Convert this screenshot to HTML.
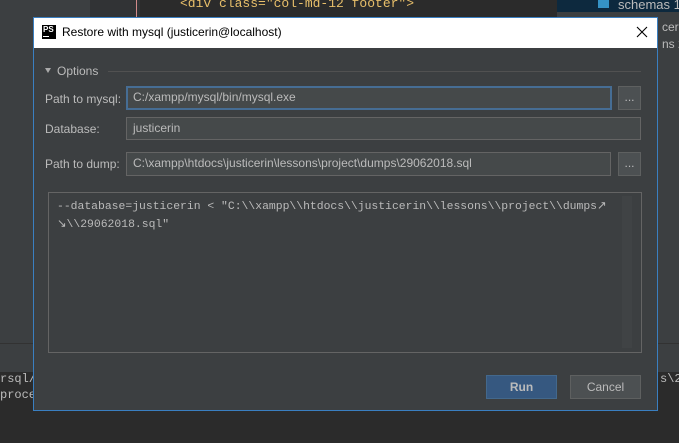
<!DOCTYPE html>
<html><head><meta charset="utf-8"><style>
*{box-sizing:border-box;margin:0;padding:0}
body{width:679px;height:443px;overflow:hidden;background:#2b2b2b;position:relative;font-family:"Liberation Sans",sans-serif;font-size:12px;color:#bbb}
.a{position:absolute;white-space:nowrap}
.mono{font-family:"Liberation Mono",monospace}
.field{position:absolute;background:#45494a;border:1px solid #646464;color:#bbb;padding-left:6px;line-height:21px;font-size:12px;white-space:nowrap}
.btn{position:absolute;background:#4c5052;border:1px solid #5e6060;color:#bbb;text-align:center;font-size:12px}
.lbl{position:absolute;left:45px;font-size:12px;color:#bbb}
</style></head><body>
<div class="a" style="left:0;top:0;width:90px;height:345px;background:#3c3f41"></div>
<div class="a" style="left:90px;top:0;width:50px;height:345px;background:#313335"></div>
<div class="a" style="left:136px;top:0;width:1px;height:345px;background:#d28b8b"></div>
<div class="a" style="left:140px;top:0;width:417px;height:345px;background:#2b2b2b"></div>
<div class="a mono" style="left:180px;top:-4px;color:#e8bf6a;font-size:13px">&lt;div class="col-md-12 footer"&gt;</div>
<div class="a" style="left:557px;top:0;width:122px;height:345px;background:#3c3f41;overflow:hidden"></div>
<div class="a" style="left:557px;top:0;width:122px;height:12px;background:#0d293e"></div>
<div class="a" style="left:598px;top:-3px;width:11px;height:11px;background:#3592c4"></div>
<div class="a" style="left:618px;top:-3px;color:#bbb;font-size:13px;width:61px;overflow:hidden">schemas 1</div>
<div class="a" style="left:662px;top:20px;color:#bbb;font-size:12px">cerin</div>
<div class="a" style="left:662px;top:37px;color:#bbb;font-size:12px">ns 2</div>
<div class="a" style="left:0;top:343px;width:679px;height:1px;background:#323232"></div>
<div class="a" style="left:0;top:344px;width:679px;height:28px;background:#3c3f41"></div>
<div class="a mono" style="left:0;top:372px;color:#bbb;font-size:12px">rsql/b</div>
<div class="a mono" style="left:0;top:388px;color:#bbb;font-size:12px">proces</div>
<div class="a mono" style="left:660px;top:372px;color:#bbb;font-size:12px">s\2</div>
<div class="a" style="left:33px;top:17px;width:625px;height:394px;background:#3c3f41;border:1px solid #3a7fc1"></div>
<div class="a" style="left:34px;top:18px;width:623px;height:30px;background:#fff"></div>
<div class="a" style="left:42px;top:25px;width:14px;height:14px;background:#000;color:#fff;font-size:8px;font-weight:bold;line-height:10px;padding-left:1px">PS<div style="width:6px;height:1px;background:#fff;margin-top:1px"></div></div>
<div class="a" style="left:62px;top:25px;color:#000;font-size:12px">Restore with mysql (justicerin@localhost)</div>
<svg class="a" style="left:636px;top:26px" width="12" height="12"><path d="M1 1L11 11M11 1L1 11" stroke="#000" stroke-width="1.1"/></svg>
<svg class="a" style="left:45px;top:68px" width="7" height="6"><path d="M0 0H6L3 5Z" fill="#aaa"/></svg>
<div class="a" style="left:57px;top:64px;color:#bbb">Options</div>
<div class="a" style="left:108px;top:71px;width:533px;height:1px;background:#515151"></div>
<div class="lbl" style="top:92px">Path to mysql:</div>
<div class="field" style="left:126px;top:86px;width:486px;height:24px;border:2px solid #466d94;line-height:19px;padding-left:5px">C:/xampp/mysql/bin/mysql.exe</div>
<div class="btn" style="left:618px;top:86px;width:23px;height:24px;line-height:20px">...</div>
<div class="lbl" style="top:122px">Database:</div>
<div class="field" style="left:126px;top:117px;width:515px;height:23px;line-height:20px">justicerin</div>
<div class="lbl" style="top:157px">Path to dump:</div>
<div class="field" style="left:126px;top:152px;width:485px;height:24px">C:\xampp\htdocs\justicerin\lessons\project\dumps\29062018.sql</div>
<div class="btn" style="left:618px;top:152px;width:23px;height:24px;line-height:20px">...</div>
<div class="a" style="left:48px;top:192px;width:594px;height:161px;background:#3c3f41;border:1px solid #646464"></div>
<div class="a" style="left:622px;top:196px;width:10px;height:152px;background:#404345"></div>
<div class="a mono" style="left:57px;top:198px;font-size:11.4px;line-height:18px;color:#bbb;white-space:pre">--database=justicerin &lt; "C:\\xampp\\htdocs\\justicerin\\lessons\\project\\dumps↗
↘\\29062018.sql"</div>
<div class="btn" style="left:486px;top:375px;width:71px;height:24px;line-height:22px;background:#365880;border-color:#43688c;font-weight:bold;color:#bbb">Run</div>
<div class="btn" style="left:570px;top:375px;width:71px;height:24px;line-height:22px">Cancel</div>
</body></html>
